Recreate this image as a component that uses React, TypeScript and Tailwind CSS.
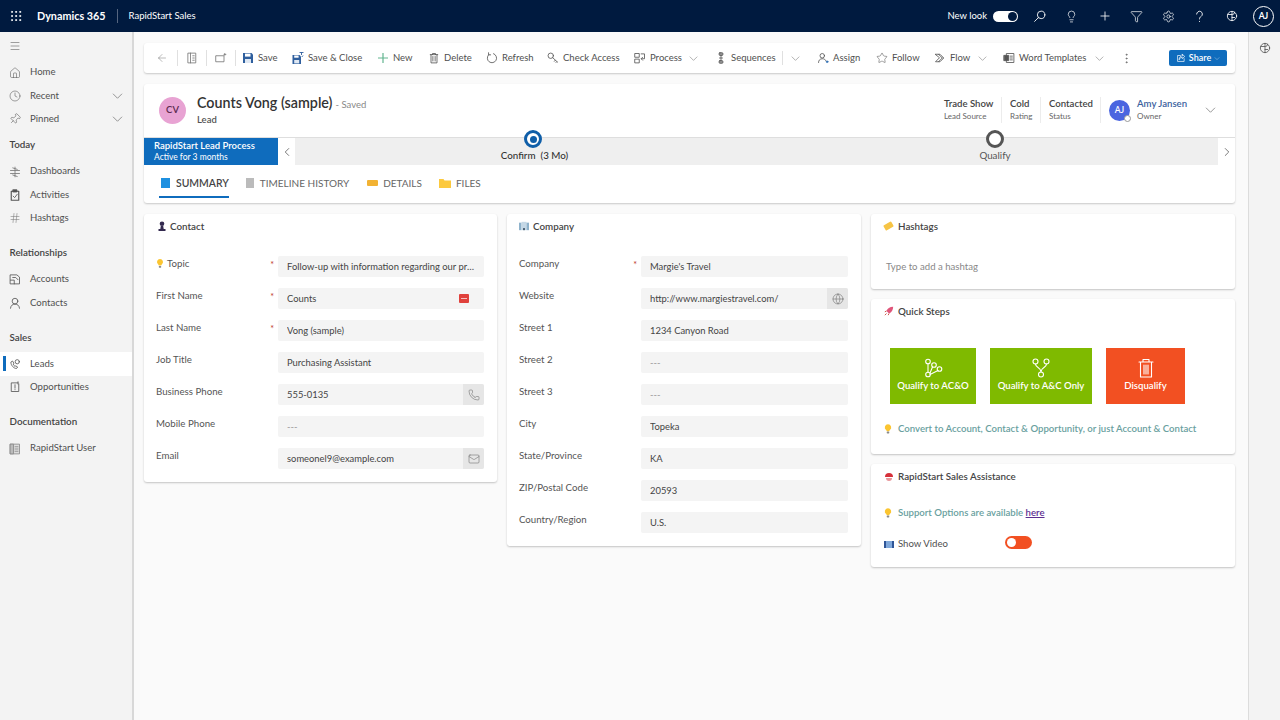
import React from "react";
import {
  ArrowLeft, ChevronLeft, ChevronRight, Clock, Globe, Hash, Home, Lightbulb, Mail, Menu, MoreVertical, Phone, Pin, Plus,
  Settings, Star, Filter, Grip,
} from "lucide-react";

const font = "font-['Lato','Open_Sans',sans-serif]";

type IC = { className?: string; strokeWidth?: number };

const Svg = ({ className, children, v = "0 0 16 16" }: { className?: string; children: React.ReactNode; v?: string }) => (
  <svg viewBox={v} className={className} fill="none" stroke="currentColor" strokeWidth="1.1" strokeLinecap="round" strokeLinejoin="round">
    {children}
  </svg>
);

const FlatChevron = ({ className }: { className?: string }) => (
  <svg viewBox="0 0 14 8" className={className} fill="none" stroke="currentColor" strokeWidth="0.9">
    <path d="M1 1l6 6 6-6" />
  </svg>
);

const Floppy = ({ className }: IC) => (
  <svg viewBox="0 0 12 12" className={className}>
    <path d="M1 1h8.5L11 2.5V11H1z" fill="#2f5f9e" />
    <rect x="3" y="1.6" width="5.5" height="3" fill="#fff" />
    <rect x="3" y="7" width="6" height="4" fill="#dfe8f3" />
  </svg>
);
const SaveClose = ({ className }: IC) => (
  <svg viewBox="0 0 12 12" className={className}>
    <path d="M0.5 3h7L9 4.5V12H0.5z" fill="#2f5f9e" />
    <rect x="2.2" y="3.5" width="4.4" height="2.2" fill="#fff" />
    <rect x="2.2" y="8" width="5" height="3.4" fill="#dfe8f3" />
    <path d="M7.5.5h4M9.5.5v2.5M11 3.5 9.8 5" stroke="#2f5f9e" fill="none" strokeWidth=".9" />
  </svg>
);
const ThinPlus = ({ className }: IC) => (
  <svg viewBox="0 0 12 12" className={className} stroke="#62b58f" strokeWidth="1.2"><path d="M6 1v10M1 6h10" /></svg>
);
const Del = ({ className }: IC) => (
  <Svg className={className}><path d="M3 3.5h10M6 3.5V2h4v1.5M4 3.5V14.5h8V3.5M6.5 6v6M9.5 6v6" /></Svg>
);
const Refresh = ({ className }: IC) => (
  <Svg className={className}><path d="M10 2.2A6.2 6.2 0 1 1 3.6 3.6M3.4 1v2.8h2.8" /></Svg>
);
const KeySearch = ({ className }: IC) => (
  <Svg className={className}><circle cx="5" cy="5" r="3.6" /><path d="M7.6 7.6 14 13.5M11 11l-1.2 1.4M13 13l-1 1" /></Svg>
);
const ProcessIc = ({ className }: IC) => (
  <Svg className={className}><rect x="1.5" y="2" width="5.5" height="5" /><rect x="1.5" y="9.5" width="5.5" height="5" /><path d="M9.5 2.5h4.5V9H10M11.5 7l-2 2 2 2" /></Svg>
);
const SeqIc = ({ className }: IC) => (
  <Svg className={className}><rect x="5.5" y="1" width="5" height="3.5" rx="1" fill="#999" /><rect x="5.5" y="11.5" width="5" height="3.5" rx="1" fill="#999" /><path d="M8 4.5v7M6 8h4" /></Svg>
);
const AssignIc = ({ className }: IC) => (
  <Svg className={className}><circle cx="7" cy="5" r="3" /><path d="M2 14c0-3 2-5 5-5s4 1 5 3" /><circle cx="13.5" cy="13" r="1.1" fill="#2f6fb5" stroke="#2f6fb5" /></Svg>
);
const FlowIc = ({ className }: IC) => (
  <Svg className={className}><path d="M2 3h6l5 5-5 5H2l5-5zM6 3l5 5M6 13l5-5" /></Svg>
);
const WordIc = ({ className }: IC) => (
  <Svg className={className}><rect x="5" y="2" width="9.5" height="12" /><rect x="1.5" y="4.5" width="6" height="7" fill="currentColor" /><path d="M9.5 5.5h3M9.5 8h3M9.5 10.5h3" /></Svg>
);
const PageIc = ({ className }: IC) => (
  <Svg className={className}><rect x="3" y="1.5" width="10" height="13" /><path d="M6 1.5v13M9 5h2M9 8h2M9 11h2" /></Svg>
);
const PopIc = ({ className }: IC) => (
  <Svg className={className}><rect x="1.5" y="5" width="10.5" height="8" /><path d="M13 2v2.5M14.5 3.2H12" /></Svg>
);
const ShareIc = ({ className }: IC) => (
  <Svg className={className}><path d="M13 9v4.5H2.5V4H7M10 2l4 3.5L10 9V7C7 7 5.5 8.5 5 11c0-4 2-6.5 5-6.5z" /></Svg>
);
const LensIc = ({ className }: IC) => (
  <Svg className={className}><circle cx="10" cy="6" r="4.6" /><path d="M6.6 9.4 2 14" /></Svg>
);
const CopilotIc = ({ className }: IC) => (
  <Svg className={className}><circle cx="8" cy="8" r="6.2" /><path d="M8 1.8v12.4M2.5 6h6a3 3 0 0 0 3-3M8 10h3.5" /></Svg>
);
const HelpIc = ({ className }: IC) => (
  <Svg className={className}><path d="M4.5 5a3.5 3.5 0 1 1 5.5 2.9C8.7 8.8 8 9.5 8 11M8 14v.2" /></Svg>
);
const DashIc = ({ className }: IC) => (
  <Svg className={className}><path d="M2 6h12M2 10h12M8 1.5v13M5 2.5l6 2M5 12l6 2" /></Svg>
);
const ActIc = ({ className }: IC) => (
  <Svg className={className}><rect x="3" y="3" width="10" height="12" strokeWidth="1.5" /><rect x="5.5" y="1" width="5" height="3" fill="currentColor" /><path d="M5.5 9.5 7.5 11.5 11 7" /></Svg>
);
const AcctIc = ({ className }: IC) => (
  <Svg className={className}><path d="M2 2.5h8.5l3.5 3V14.5H2zM5 6h4l3 3" /><path d="M2 9.5h5V14.5" /></Svg>
);
const LeadIc = ({ className }: IC) => (
  <Svg className={className}><circle cx="11" cy="5" r="2.8" /><path d="M2.5 6c0 4 4 8 7.5 8l1.5-2-2.5-1.5-1 .8C7 10.5 6 9.5 5.5 8l1-1L5 4.5z" /></Svg>
);
const OppIc = ({ className }: IC) => (
  <Svg className={className}><path d="M12 2.5H3V14h10V4M8 5v4.5M8 11.5v.2" /><path d="M12 1v3" /></Svg>
);
const BookIc = ({ className }: IC) => (
  <Svg className={className}><rect x="2" y="1.5" width="12" height="13" fill="#ddd" /><rect x="2" y="1.5" width="4" height="13" fill="#bbb" /><path d="M8 5h4M8 8h4M8 11h4" /></Svg>
);
const UserOut = ({ className }: IC) => (
  <Svg className={className}><circle cx="8" cy="5.5" r="3.8" /><path d="M2 15c.3-3.5 2.5-5.5 6-5.5s5.7 2 6 5.5" /></Svg>
);
const PersonFill = ({ className }: IC) => (
  <svg viewBox="0 0 10 10" className={className}>
    <circle cx="5" cy="2.7" r="2.3" fill="#33294f" />
    <path d="M3.8 5h2.4l.5 3H8.5V10h-7V8h1.8z" fill="#33294f" />
  </svg>
);
const BuildingIc = ({ className }: IC) => (
  <svg viewBox="0 0 12 12" className={className}>
    <rect x="0" y="2" width="3" height="9" fill="#8fb3cc" />
    <rect x="3" y="1" width="6" height="10" fill="#c5d8e6" />
    <rect x="9" y="2" width="3" height="9" fill="#8fb3cc" />
    <rect x="5" y="8.5" width="2" height="2.5" fill="#34495e" />
  </svg>
);
const Q1 = ({ className }: IC) => (
  <Svg className={className} v="0 0 20 20"><circle cx="5" cy="3.5" r="2.3" /><circle cx="5" cy="16.5" r="2.3" /><circle cx="11" cy="7" r="2.3" /><circle cx="16.5" cy="11" r="2.3" /><path d="M5 5.8v8.4M7 15l2.5-6M7 16.5l8-4" /></Svg>
);
const Q2 = ({ className }: IC) => (
  <Svg className={className} v="0 0 20 20"><circle cx="4.5" cy="3.5" r="2.5" /><circle cx="15.5" cy="3.5" r="2.5" /><circle cx="10" cy="16.5" r="2.5" /><path d="M4.5 6c0 4 5.5 3 5.5 8M15.5 6c0 4-5.5 3-5.5 8" /></Svg>
);
const Q3 = ({ className }: IC) => (
  <Svg className={className} v="0 0 20 20"><path d="M3 4h14M7 4V1.5h6V4M4.5 4v15h11V4M8 7v9M10 7v9M12 7v9" /></Svg>
);

function Bulb({ c = "w-[10px] h-[12px]" }: { c?: string }) {
  return (
    <svg viewBox="0 0 10 12" className={c}>
      <path d="M5 0a4 4 0 0 0-2.4 7.2c.5.4.7.9.8 1.5h3.2c.1-.6.3-1.1.8-1.5A4 4 0 0 0 5 0z" fill="#fbc531" />
      <rect x="3.4" y="9.2" width="3.2" height="2.4" rx=".8" fill="#8a8a8a" />
    </svg>
  );
}

function NavItem({ t, I, ch, active, ic }: { t: string; I: any; ch?: boolean; active?: boolean; ic?: string }) {
  return (
    <div className={`relative flex h-[23.3px] items-center pl-[9px] pr-[9px] ${active ? "bg-white" : ""}`}>
      {active && <div className="absolute left-[3px] top-[4px] h-[15px] w-[3px] bg-[#0f6cbd]" />}
      <I className={`h-[12px] w-[12px] ${ic ?? "text-[#555]"}`} strokeWidth={1.1} />
      <span className="ml-[9px] flex-1 text-[9.6px] text-[#505050]">{t}</span>
      {ch && <FlatChevron className="h-[6px] w-[11px] text-[#666]" />}
    </div>
  );
}

function NavHead({ t, c }: { t: string; c: string }) {
  return <div className={`pl-[9.5px] text-[9.8px] font-semibold leading-[14px] text-[#444] ${c}`}>{t}</div>;
}

function Sidebar() {
  return (
    <aside className="w-[134px] shrink-0 border-r-2 border-[#d8d8d8] bg-[#f3f3f3] pt-[8px]">
      <Menu className="ml-[9px] h-[12px] w-[12px] text-[#555]" strokeWidth={1.1} />
      <div className="mt-[9px]">
        <NavItem t="Home" I={Home} />
        <NavItem t="Recent" I={Clock} ch />
        <NavItem t="Pinned" I={Pin} ch ic="text-[#555] rotate-45" />
      </div>
      <NavHead t="Today" c="mt-[6px]" />
      <div className="mt-[9px]">
        <NavItem t="Dashboards" I={DashIc} ic="text-[#777]" />
        <NavItem t="Activities" I={ActIc} />
        <NavItem t="Hashtags" I={Hash} ic="text-[#777]" />
      </div>
      <NavHead t="Relationships" c="mt-[15px]" />
      <div className="mt-[9px]">
        <NavItem t="Accounts" I={AcctIc} />
        <NavItem t="Contacts" I={UserOut} />
      </div>
      <NavHead t="Sales" c="mt-[16px]" />
      <div className="mt-[8px]">
        <NavItem t="Leads" I={LeadIc} active />
        <NavItem t="Opportunities" I={OppIc} />
      </div>
      <NavHead t="Documentation" c="mt-[15px]" />
      <div className="mt-[9px]">
        <NavItem t="RapidStart User" I={BookIc} ic="text-[#888]" />
      </div>
    </aside>
  );
}

function TopBar() {
  return (
    <header className="flex h-[32px] shrink-0 items-center bg-[#001a3f] text-white">
      <Grip className="ml-[9px] h-[14px] w-[14px]" strokeWidth={1.6} />
      <span className="ml-[14px] text-[10.8px] font-bold">Dynamics 365</span>
      <div className="ml-[11px] h-[14px] w-px bg-[#55657f]" />
      <span className="ml-[11px] text-[9.5px]">RapidStart Sales</span>
      <span className="ml-auto text-[9.5px]">New look</span>
      <div className="ml-[6px] flex h-[11px] w-[25px] items-center justify-end rounded-full bg-white pr-[1px]">
        <div className="h-[9px] w-[9px] rounded-full bg-[#001a3f]" />
      </div>
      <LensIc className="ml-[15px] h-[13px] w-[13px]" />
      <Lightbulb className="ml-[19px] h-[13px] w-[13px]" strokeWidth={1.3} />
      <Plus className="ml-[20px] h-[14px] w-[14px]" strokeWidth={1.4} />
      <Filter className="ml-[18px] h-[13px] w-[13px]" strokeWidth={1.3} />
      <Settings className="ml-[19px] h-[13px] w-[13px]" strokeWidth={1.3} />
      <HelpIc className="ml-[18px] h-[13px] w-[13px]" />
      <CopilotIc className="ml-[20px] h-[12px] w-[12px]" />
      <div className="ml-[15px] mr-[6px] flex h-[21px] w-[21px] items-center justify-center rounded-full border border-white text-[8.5px] font-bold">AJ</div>
    </header>
  );
}

const cmds = [
  { t: "Save", I: Floppy, w: "w-[19px]", ml: "ml-[6px]", c: "" },
  { t: "Save & Close", I: SaveClose, w: "w-[55px]", ml: "ml-[15px]", c: "" },
  { t: "New", I: ThinPlus, w: "w-[20px]", ml: "ml-[14px]", c: "" },
  { t: "Delete", I: Del, w: "w-[27px]", ml: "ml-[15px]", c: "text-[#555]" },
  { t: "Refresh", I: Refresh, w: "w-[30px]", ml: "ml-[15px]", c: "text-[#555]" },
  { t: "Check Access", I: KeySearch, w: "w-[55px]", ml: "ml-[15px]", c: "text-[#555]" },
  { t: "Process", I: ProcessIc, w: "w-[30px]", ml: "ml-[16px]", c: "text-[#555]", ch: true },
  { t: "Sequences", I: SeqIc, w: "w-[44px]", ml: "ml-[17px]", c: "text-[#555]" },
];
const cmds2 = [
  { t: "Assign", I: AssignIc, w: "w-[27px]", ml: "ml-[17px]", c: "text-[#555]" },
  { t: "Follow", I: Star, w: "w-[26px]", ml: "ml-[16px]", c: "text-[#555]" },
  { t: "Flow", I: FlowIc, w: "w-[19px]", ml: "ml-[16px]", c: "text-[#555]", ch: true },
  { t: "Word Templates", I: WordIc, w: "w-[67px]", ml: "ml-[16px]", c: "text-[#555]", ch: true },
];

function Cmd({ t, I, w, ml, c, ch }: any) {
  return (
    <div className={`flex items-center ${ml}`}>
      <I className={`h-[12px] w-[12px] ${c}`} strokeWidth={1.1} />
      <span className={`ml-[4px] whitespace-nowrap pt-px text-[9.5px] text-[#505050] ${w}`}>{t}</span>
      {ch && <FlatChevron className="ml-[9px] h-[5px] w-[9px] text-[#777]" />}
    </div>
  );
}

function CommandBar() {
  return (
    <div className="flex h-[30px] items-center rounded-[3px] bg-white pl-[12px] pr-[8px] shadow-[0_1px_2px_rgba(0,0,0,0.2)]">
      <ArrowLeft className="h-[12px] w-[12px] text-[#777]" strokeWidth={1} />
      <div className="ml-[9px] h-[16px] w-px bg-[#e0e0e0]" />
      <PageIc className="ml-[8px] h-[12px] w-[12px] text-[#777]" />
      <div className="ml-[8px] h-[16px] w-px bg-[#e0e0e0]" />
      <PopIc className="ml-[8px] h-[12px] w-[12px] text-[#777]" />
      <div className="ml-[8px] h-[16px] w-px bg-[#e0e0e0]" />
      {cmds.map((c) => (
        <Cmd key={c.t} {...c} />
      ))}
      <div className="ml-[7px] h-[14px] w-px bg-[#e0e0e0]" />
      <FlatChevron className="ml-[8px] h-[5px] w-[9px] text-[#777]" />
      {cmds2.map((c) => (
        <Cmd key={c.t} {...c} />
      ))}
      <MoreVertical className="ml-[16px] h-[13px] w-[13px] text-[#555]" strokeWidth={1.2} />
      <div className="ml-auto flex h-[16px] w-[58px] items-center justify-center gap-[3px] rounded-[2px] bg-[#0f6cbd] text-[9px] font-semibold text-white">
        <ShareIc className="h-[10px] w-[10px]" />
        Share
        <FlatChevron className="h-[3px] w-[6px]" />
      </div>
    </div>
  );
}

function Stat({ a, b, w }: { a: string; b: string; w: string }) {
  return (
    <div className={`border-r border-[#ececec] ${w}`}>
      <div className="text-[9.6px] font-semibold leading-[13px] text-[#444]">{a}</div>
      <div className="text-[8px] leading-[13px] text-[#666]">{b}</div>
    </div>
  );
}

function RecordHeader() {
  return (
    <div className="mt-[11px] rounded-[3px] bg-white shadow-[0_1px_2px_rgba(0,0,0,0.2)]">
      <div className="flex h-[53px] items-center pl-[15px]">
        <div className="flex h-[27px] w-[27px] items-center justify-center rounded-full bg-[#e8a3d3] text-[9.5px] font-semibold text-[#5b2a4e]">CV</div>
        <div className="ml-[11px] -mt-[1px]">
          <div className="flex items-baseline">
            <span className="text-[14.3px] font-semibold leading-[18px] text-[#333]">Counts Vong (sample)</span>
            <span className="ml-[3px] text-[9.5px] text-[#888]">- Saved</span>
          </div>
          <div className="mt-[2px] text-[9.5px] font-semibold leading-[12px] text-[#555]">Lead</div>
        </div>
        <div className="ml-auto -mt-[1px] flex items-center">
          <Stat a="Trade Show" b="Lead Source" w="w-[58px]" />
          <Stat a="Cold" b="Rating" w="ml-[8px] w-[31px]" />
          <Stat a="Contacted" b="Status" w="ml-[8px] w-[52px]" />
          <div className="relative ml-[8px] flex h-[21px] w-[21px] items-center justify-center rounded-full bg-[#4a65e0] text-[8.5px] font-semibold text-white">
            AJ
            <div className="absolute -bottom-[1px] -right-[1px] h-[7px] w-[7px] rounded-full border border-[#999] bg-white" />
          </div>
          <div className="ml-[7px] w-[68px]">
            <div className="text-[9.6px] font-semibold leading-[13px] text-[#3b5f9e]">Amy Jansen</div>
            <div className="text-[8px] leading-[13px] text-[#666]">Owner</div>
          </div>
          <FlatChevron className="mr-[19px] h-[6px] w-[11px] text-[#666]" />
        </div>
      </div>
      <div className="flex h-[28px] border-t border-[#dedede] bg-[#efefef]">
        <div className="flex w-[134px] flex-col justify-center bg-[#0f6cbd] pl-[10px] text-white">
          <div className="text-[9.5px] font-semibold leading-[12px]">RapidStart Lead Process</div>
          <div className="text-[8.5px] leading-[11px]">Active for 3 months</div>
        </div>
        <div className="flex w-[17px] items-center justify-center bg-white">
          <ChevronLeft className="h-[14px] w-[14px] text-[#444]" strokeWidth={1.2} />
        </div>
        <div className="ml-[144px] flex w-[188px] flex-col items-center -mt-[8px]">
          <div className="flex h-[18px] w-[18px] items-center justify-center rounded-full border-[3px] border-[#0f5ea8] bg-white">
            <div className="h-[7px] w-[7px] rounded-full bg-[#0f5ea8]" />
          </div>
          <div className="ml-[3px] whitespace-nowrap text-[9.8px] font-medium leading-[14px] text-[#333]">Confirm&nbsp; (3 Mo)</div>
        </div>
        <div className="ml-[274px] flex w-[188px] flex-col items-center -mt-[8px]">
          <div className="h-[18px] w-[18px] rounded-full border-[3px] border-[#555] bg-white" />
          <div className="text-[9.8px] leading-[14px] text-[#555]">Qualify</div>
        </div>
        <div className="ml-auto flex w-[17px] items-center justify-center bg-white">
          <ChevronRight className="h-[14px] w-[14px] text-[#444]" strokeWidth={1.2} />
        </div>
      </div>
      <div className="flex h-[38px] items-start pl-[15px] pt-[11px]">
        <div className="flex h-[22px] items-start border-b-2 border-[#0f6cbd] pl-[2px]">
          <div className="mt-[2px] h-[10px] w-[9px] bg-[#1e90e0]" />
          <span className="ml-[6px] text-[10.4px] font-semibold leading-[15px] text-[#444]">SUMMARY</span>
        </div>
        <div className="ml-[17px] flex items-start">
          <div className="mt-[2px] h-[10px] w-[8px] bg-[#bbb]" />
          <span className="ml-[6px] text-[10px] leading-[15px] text-[#666]">TIMELINE HISTORY</span>
        </div>
        <div className="ml-[18px] flex items-start">
          <div className="mt-[4px] h-[6px] w-[11px] rounded-[1px] bg-[#f2b233]" />
          <span className="ml-[5px] text-[10px] leading-[15px] text-[#666]">DETAILS</span>
        </div>
        <div className="ml-[17px] flex items-start">
          <svg viewBox="0 0 12 10" className="mt-[2px] h-[10px] w-[12px]"><path d="M0 1h4.5l1 1.5H12V10H0z" fill="#fcc93e" /></svg>
          <span className="ml-[5px] text-[10px] leading-[15px] text-[#666]">FILES</span>
        </div>
      </div>
    </div>
  );
}

function Field({ label, value, req, I, muted, tag, bulb }: any) {
  return (
    <div className="flex h-[21px] items-start">
      <div className="flex w-[122px] shrink-0 items-center pt-[1px] text-[9.7px] leading-[12px] text-[#555]">
        {bulb && <Bulb c="mr-[3px] h-[9px] w-[8px]" />}
        <span>{label}</span>
        {req && <span className="ml-auto mr-[4px] h-[6px] text-[9px] leading-[9px] text-[#c0392b]">*</span>}
      </div>
      <div className="flex h-[21px] min-w-0 flex-1 items-center rounded-[2px] bg-[#f4f4f4] pl-[9px]">
        <span className={`flex-1 truncate pr-[10px] pt-[1px] text-[9.4px] ${muted ? "text-[#999]" : "text-[#444]"}`}>{value}</span>
        {tag && (
          <div className="mr-[15px] flex h-[9px] w-[10px] items-center justify-center rounded-[1px] bg-[#e0413c]">
            <div className="h-px w-[6px] bg-[#f7c0be]" />
          </div>
        )}
        {I && (
          <div className="flex h-[21px] w-[21px] items-center justify-center rounded-r-[2px] bg-[#e6e6e6]">
            <I className="h-[12px] w-[12px] text-[#666]" strokeWidth={1.1} />
          </div>
        )}
      </div>
    </div>
  );
}

function Card({ c, children }: { c: string; children: React.ReactNode }) {
  return <section className={`rounded-[3px] bg-white shadow-[0_1px_2px_rgba(0,0,0,0.22)] ${c}`}>{children}</section>;
}

function CardHead({ icon, t }: { icon: React.ReactNode; t: string }) {
  return (
    <div className="flex items-center text-[9.8px] font-semibold leading-[14px] text-[#444]">
      <span className="flex w-[14px] shrink-0 items-center">{icon}</span>
      {t}
    </div>
  );
}

const contact = [
  { label: "Topic", value: "Follow-up with information regarding our products and pricing", req: true, bulb: true },
  { label: "First Name", value: "Counts", req: true, tag: true },
  { label: "Last Name", value: "Vong (sample)", req: true },
  { label: "Job Title", value: "Purchasing Assistant" },
  { label: "Business Phone", value: "555-0135", I: Phone },
  { label: "Mobile Phone", value: "---", muted: true },
  { label: "Email", value: "someonel9@example.com", I: Mail },
];
const company = [
  { label: "Company", value: "Margie's Travel", req: true },
  { label: "Website", value: "http://www.margiestravel.com/", I: Globe },
  { label: "Street 1", value: "1234 Canyon Road" },
  { label: "Street 2", value: "---", muted: true },
  { label: "Street 3", value: "---", muted: true },
  { label: "City", value: "Topeka" },
  { label: "State/Province", value: "KA" },
  { label: "ZIP/Postal Code", value: "20593" },
  { label: "Country/Region", value: "U.S." },
];

function Step({ t, bg, w, I }: { t: string; bg: string; w: string; I: any }) {
  return (
    <div className={`flex h-[56px] flex-col items-center pt-[10px] ${bg} ${w}`}>
      <I className="h-[20px] w-[20px] text-white" />
      <span className="mt-px whitespace-nowrap text-[9.6px] font-semibold leading-[14px] text-white">{t}</span>
    </div>
  );
}

function Forms() {
  return (
    <div className="mt-[11px] flex items-start gap-[10px]">
      <Card c="w-[353px] shrink-0 pb-[13px] pl-[12px] pr-[13px] pt-[5px]">
        <CardHead icon={<PersonFill className="ml-[1px] h-[10px] w-[10px]" />} t="Contact" />
        <div className="mt-[23px] flex flex-col gap-[11px]">
          {contact.map((f) => (
            <Field key={f.label} {...f} />
          ))}
        </div>
      </Card>
      <Card c="w-[354px] shrink-0 pb-[13px] pl-[12px] pr-[13px] pt-[5px]">
        <CardHead icon={<BuildingIc className="h-[10px] w-[10px]" />} t="Company" />
        <div className="mt-[23px] flex flex-col gap-[11px]">
          {company.map((f) => (
            <Field key={f.label} {...f} />
          ))}
        </div>
      </Card>
      <div className="flex w-[364px] shrink-0 flex-col gap-[10px]">
        <Card c="h-[75px] pl-[13px] pt-[5px]">
          <CardHead icon={<div className="h-[6px] w-[9px] -rotate-[30deg] rounded-[1px] bg-[#f6c445]" />} t="Hashtags" />
          <div className="mt-[27px] pl-[2px] text-[9.6px] leading-[14px] text-[#888]">Type to add a hashtag</div>
        </Card>
        <Card c="h-[155px] pl-[13px] pt-[5px]">
          <CardHead
            icon={
              <svg viewBox="0 0 12 12" className="h-[10px] w-[10px]">
                <path d="M11 1C7 1 4 3 3 6l3 3c3-1 5-4 5-8z" fill="#e0557a" />
                <path d="M3 9 1 11M3 6 1 7M6 9l-1 2" stroke="#c0392b" strokeWidth="1" />
              </svg>
            }
            t="Quick Steps"
          />
          <div className="mt-[30px] flex gap-[14px] pl-[6px]">
            <Step t="Qualify to AC&O" bg="bg-[#7fba00]" w="w-[86px]" I={Q1} />
            <Step t="Qualify to A&C Only" bg="bg-[#7fba00]" w="w-[102px]" I={Q2} />
            <Step t="Disqualify" bg="bg-[#f25022]" w="w-[79px]" I={Q3} />
          </div>
          <div className="mt-[18px] flex items-center text-[9.6px] font-semibold leading-[14px] text-[#6a9fa0]">
            <span className="w-[14px]"><Bulb c="h-[10px] w-[8px]" /></span>
            Convert to Account, Contact &amp; Opportunity, or just Account &amp; Contact
          </div>
        </Card>
        <Card c="h-[103px] pl-[13px] pt-[5px]">
          <CardHead
            icon={
              <svg viewBox="0 0 10 10" className="h-[10px] w-[10px]">
                <path d="M1 6a4 4 0 0 1 8 0z" fill="#d6303a" />
                <path d="M2 7h6a3 3 0 0 1-6 0z" fill="#e8969a" />
              </svg>
            }
            t="RapidStart Sales Assistance"
          />
          <div className="mt-[23px] flex items-center text-[9.6px] font-semibold leading-[14px] text-[#6a9fa0]">
            <span className="w-[14px]"><Bulb c="h-[10px] w-[8px]" /></span>
            Support Options are available&nbsp;<span className="text-[#5c2d91] underline">here</span>
          </div>
          <div className="mt-[17px] flex items-center">
            <span className="w-[14px]"><div className="h-[7px] w-[10px] border-x-2 border-[#2f5597] bg-[#7fa7d9]" /></span>
            <span className="w-[107px] text-[9.6px] leading-[14px] text-[#505050]">Show Video</span>
            <div className="-mt-[3px] flex h-[13px] w-[27px] items-center rounded-full bg-[#f25022] pl-[2px]">
              <div className="h-[9px] w-[9px] rounded-full bg-white" />
            </div>
          </div>
        </Card>
      </div>
    </div>
  );
}

export default function App() {
  return (
    <div className={`flex h-[720px] w-[1280px] flex-col overflow-hidden bg-[#fafafa] ${font}`}>
      <TopBar />
      <div className="flex min-h-0 flex-1">
        <Sidebar />
        <main className="min-w-0 flex-1 px-[10px] pt-[11px]">
          <div className="w-[1091px]">
            <CommandBar />
            <RecordHeader />
            <Forms />
          </div>
        </main>
        <aside className="flex w-[32px] shrink-0 justify-center border-l border-[#dcdcdc] bg-[#f3f3f3] pt-[10px]">
          <CopilotIc className="h-[12px] w-[12px] text-[#555]" />
        </aside>
      </div>
    </div>
  );
}
